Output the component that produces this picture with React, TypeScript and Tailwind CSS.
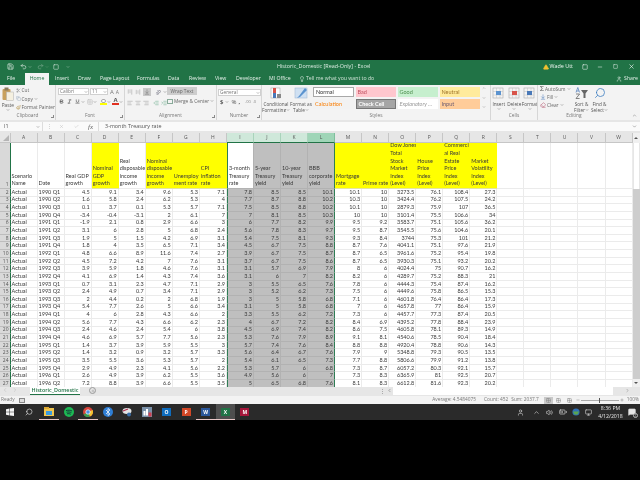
import React from "react";
import { ChevronDown, ChevronUp, Scissors, Copy, Paintbrush, Bold, Italic, Underline, Search, Lightbulb, X, Check, Minus, Plus, Square, Save, Undo2, Redo2, User, Eraser, Volume2, BatteryMedium, Monitor, MessageSquare, Grid2x2, AlignLeft, AlignCenter, AlignRight, Indent, Outdent, ArrowDownToLine, ChevronLeft, ChevronRight, AlertTriangle } from "lucide-react";

const columns = "ABCDEFGHIJKLMNOPQRSTUVW".split("");

const headers: { t: string; y?: boolean }[] = [
  { t: "Scenario\nName" },
  { t: "Date" },
  { t: "Real GDP\ngrowth" },
  { t: "Nominal\nGDP\ngrowth", y: true },
  { t: "Real\ndisposable\nincome\ngrowth" },
  { t: "Nominal\ndisposable\nincome\ngrowth", y: true },
  { t: "Unemploy\nment rate", y: true },
  { t: "CPI\ninflation\nrate", y: true },
  { t: "3-month\nTreasury\nrate" },
  { t: "5-year\nTreasury\nyield" },
  { t: "10-year\nTreasury\nyield" },
  { t: "BBB\ncorporate\nyield" },
  { t: "Mortgage\nrate", y: true },
  { t: "Prime rate", y: true },
  { t: "Dow Jones\nTotal\nStock\nMarket\nIndex\n(Level)", y: true },
  { t: "House\nPrice\nIndex\n(Level)", y: true },
  { t: "Commerci\nal Real\nEstate\nPrice\nIndex\n(Level)", y: true },
  { t: "Market\nVolatility\nIndex\n(Level)", y: true },
];

const rows = [
  "1990_Q1 4.5 9.1 3.4 9.6 5.3 7.1 7.8 8.5 8.5 10.1 10.1 10 3273.5 76.1 108.4 27.3",
  "1990_Q2 1.6 5.8 2.4 6.2 5.3 4 7.7 8.7 8.8 10.2 10.3 10 3424.4 76.2 107.5 24.2",
  "1990_Q3 0.1 3.7 0.1 5.3 5.7 7.1 7.5 8.5 8.8 10.2 10.1 10 2879.3 75.9 107 36.5",
  "1990_Q4 -3.4 -0.4 -3.1 2 6.1 7 7 8.1 8.5 10.3 10 10 3101.4 75.5 106.6 34",
  "1991_Q1 -1.9 2.1 0.8 2.9 6.6 3 6 7.7 8.2 9.9 9.5 9.2 3583.7 75.1 105.6 36.2",
  "1991_Q2 3.1 6 2.8 5 6.8 2.4 5.6 7.8 8.3 9.7 9.5 8.7 3545.5 75.6 104.6 20.1",
  "1991_Q3 1.9 5 1.5 4.2 6.9 3.1 5.4 7.5 8.1 9.3 9.3 8.4 3744 75.3 101 21.2",
  "1991_Q4 1.8 4 3.5 6.5 7.1 3.4 4.5 6.7 7.5 8.8 8.7 7.6 4041.1 75.1 97.6 21.9",
  "1992_Q1 4.8 6.6 8.9 11.6 7.4 2.7 3.9 6.7 7.5 8.7 8.7 6.5 3961.6 75.2 95.4 19.8",
  "1992_Q2 4.5 7.2 4.2 7 7.6 3.1 3.7 6.7 7.5 8.6 8.7 6.5 3930.3 75.1 93.2 20.2",
  "1992_Q3 3.9 5.9 1.8 4.6 7.6 3.1 3.1 5.7 6.9 7.9 8 6 4024.4 75 90.7 16.2",
  "1992_Q4 4.1 6.9 1.4 4.3 7.4 3.6 3.1 6 7 8.2 8.2 6 4289.7 75.2 88.3 21",
  "1993_Q1 0.7 3.1 2.3 4.7 7.1 2.9 3 5.5 6.5 7.6 7.8 6 4444.3 75.4 87.4 16.2",
  "1993_Q2 2.4 4.9 0.7 3.4 7.1 2.9 3 5.2 6.2 7.3 7.5 6 4449.6 75.8 86.5 15.3",
  "1993_Q3 2 4.4 0.2 2 6.8 1.9 3 5 5.8 6.8 7.1 6 4601.8 76.4 86.4 17.3",
  "1993_Q4 5.4 7.7 2.6 5 6.6 3.4 3.1 5 5.8 6.8 7 6 4657.8 77 86.4 15.9",
  "1994_Q1 4 6 2.8 4.3 6.6 2 3.3 5.5 6.2 7.2 7.3 6 4457.7 77.3 87.4 20.5",
  "1994_Q2 5.6 7.7 4.3 6.6 6.2 2.3 4 6.7 7.2 8.2 8.4 6.9 4395.2 77.8 88.4 23.9",
  "1994_Q3 2.4 4.6 2.4 5.4 6 3.8 4.5 6.9 7.4 8.2 8.6 7.5 4605.8 78.1 89.3 14.9",
  "1994_Q4 4.6 6.9 5.7 7.7 5.6 2.3 5.3 7.6 7.9 8.9 9.1 8.1 4540.6 78.5 90.4 18.4",
  "1995_Q1 1.4 3.7 3.9 5.9 5.5 3 5.7 7.4 7.6 8.4 8.8 8.8 4920.4 78.8 90.6 14.3",
  "1995_Q2 1.4 3.2 0.9 3.2 5.7 3.3 5.6 6.4 6.7 7.6 7.9 9 5348.8 79.3 90.5 13.5",
  "1995_Q3 3.5 5.5 3.6 5.3 5.7 2 5.4 6.1 6.5 7.3 7.7 8.8 5806.6 79.9 91.2 13.8",
  "1995_Q4 2.9 4.9 2.3 4.1 5.6 2.2 5.3 5.7 6 6.8 7.3 8.7 6057.2 80.3 92.1 15.7",
  "1996_Q1 2.6 4.9 3.9 6.2 5.5 3.6 4.9 5.6 6 7 7.3 8.3 6365.9 81 92.5 20.7",
  "1996_Q2 7.2 8.8 3.9 6.6 5.5 3.5 5 6.5 6.8 7.6 8.1 8.3 6612.8 81.6 92.3 20.2",
];

function cellTone(i: number) {
  if (i === 8) return "bg-[#bfbfbf] border-b-[#b2b2b2] border-r-[#b2b2b2] border-l border-l-[#2f7d55]";
  if (i === 9 || i === 10) return "bg-[#bfbfbf] border-b-[#b2b2b2] border-r-[#b2b2b2]";
  if (i === 11) return "bg-[#bfbfbf] border-b-[#b2b2b2] border-r-[#2f7d55]";
  return "bg-white border-b-[#ebebeb] border-r-[#ebebeb]";
}

function Sheet() {
  return (
    <div className="flex h-[254px] overflow-hidden bg-[#e6e6e6]">
      <div className="grid h-[255px] w-[632.6px] shrink-0 grid-cols-[10.5px_repeat(23,27.05px)] grid-rows-[10px_46px_repeat(26,7.65px)] font-['Lato'] text-[5.5px] leading-[7px] text-[#3a3a3a]">
        <div className="flex items-end justify-end border-r border-b border-[#c6c6c6] bg-[#e6e6e6] p-[1px]">
          <div className="h-0 w-0 border-b-[6px] border-l-[6px] border-b-[#b5b5b5] border-l-transparent" />
        </div>
        {columns.map((c, i) => (
          <div
            key={c}
            className={
              "flex items-center justify-center border-r border-b font-['Open_Sans'] text-[5px] text-[#555] " +
              (i === 11
                ? "border-[#7fbf9d] border-b-[#217346] bg-[#9fd5b7]"
                : i >= 8 && i <= 10
                ? "border-[#a9d3bb] border-b-[#217346] bg-[#cfe8da]"
                : "border-[#c6c6c6] bg-[#e6e6e6]")
            }
          >
            {c}
          </div>
        ))}
        <div className="flex items-end justify-end border-r border-b border-r-[#217346] border-b-[#bdbdbd] bg-[#d9d9d9] pr-[1px] font-['Open_Sans'] text-[5px] text-[#555]">1</div>
        {columns.map((c, i) => {
          const h = headers[i];
          const yellow = h && h.y;
          let tone = "border-r border-b border-b-[#ebebeb] border-r-[#ebebeb] bg-white";
          if (yellow) tone = "bg-[#ffff00] border-b border-b-[#e4e4a0]";
          if (i === 8) tone = "bg-white border-l border-l-[#2f7d55] border-r border-r-[#b2b2b2] border-b border-b-[#b2b2b2]";
          if (i === 9 || i === 10) tone = "bg-[#bfbfbf] border-r border-r-[#b2b2b2] border-b border-b-[#b2b2b2]";
          if (i === 11) tone = "bg-[#bfbfbf] border-r border-r-[#2f7d55] border-b border-b-[#b2b2b2]";
          return (
            <div key={c} className={"flex items-end overflow-hidden pl-[1px] whitespace-pre leading-[7.6px] " + tone}>
              {h ? h.t : ""}
            </div>
          );
        })}
        {rows.map((r, ri) => {
          const vals = r.split(" ");
          return (
            <React.Fragment key={ri}>
              <div className="flex items-center justify-end border-r border-b border-r-[#217346] border-b-[#bdbdbd] bg-[#d9d9d9] pr-[1px] font-['Open_Sans'] text-[5px] text-[#555]">
                {ri + 2}
              </div>
              {columns.map((c, i) => {
                let text = "";
                if (i === 0) text = "Actual";
                else if (i === 1) text = vals[0].replace("_", " ");
                else if (i - 1 < vals.length) text = vals[i - 1];
                return (
                  <div
                    key={c}
                    className={
                      "flex items-center overflow-hidden border-r border-b pr-[1px] pl-[1px] " +
                      (i < 2 ? "justify-start " : "justify-end ") +
                      cellTone(i)
                    }
                  >
                    {text}
                  </div>
                );
              })}
            </React.Fragment>
          );
        })}
      </div>
      <div className="flex flex-1 flex-col bg-[#cdcdcd]">
        <div className="flex h-[10px] items-center justify-center bg-[#f0f0f0]">
          <div className="h-0 w-0 border-r-[2px] border-b-[2px] border-l-[2px] border-r-transparent border-b-[#555] border-l-transparent" />
        </div>
        <div className="h-[46px] border-x border-[#e6e6e6] bg-white" />
        <div className="flex-1" />
        <div className="flex h-[8px] items-center justify-center bg-[#f0f0f0]">
          <div className="h-0 w-0 border-t-[2px] border-r-[2px] border-l-[2px] border-t-[#555] border-r-transparent border-l-transparent" />
        </div>
      </div>
    </div>
  );
}

function Group({ w, label, launcher, children }: { w: string; label: string; launcher?: boolean; children: React.ReactNode }) {
  return (
    <div className={"relative flex h-[35px] shrink-0 flex-col border-r border-[#d6d6d6] " + w}>
      <div className="flex flex-1 overflow-hidden">{children}</div>
      <div className="h-[8px] pb-[1px] text-center text-[4.8px] leading-[6px] text-[#777]">{label}</div>
      {launcher && (
        <div className="absolute right-[1px] bottom-[2px] h-[3px] w-[3px] border-r border-b border-[#888]" />
      )}
    </div>
  );
}

const Chev = () => <ChevronDown size={4} strokeWidth={2.5} className="shrink-0 text-[#666]" />;

function LargeBtn({ w, icon, a, b }: { w: string; icon: React.ReactNode; a: string; b?: string }) {
  return (
    <div className={"flex shrink-0 flex-col items-center pt-[2px] text-[4.7px] leading-[6px] text-[#555] " + w}>
      <div className="flex h-[12px] items-center justify-center">{icon}</div>
      <div className="mt-[2px] whitespace-nowrap">{a}</div>
      <div className="flex items-center whitespace-nowrap">
        {b}
        <Chev />
      </div>
    </div>
  );
}

function StyleCell({ cls, children }: { cls: string; children: string }) {
  return (
    <div className={"flex h-[10px] w-[40.5px] items-center overflow-hidden whitespace-nowrap pl-[2px] font-['Lato'] text-[5.5px] " + cls}>
      {children}
    </div>
  );
}

function Ribbon() {
  return (
    <div className="flex h-[35px] bg-[#f3f3f3] font-['Open_Sans']">
      <Group w="w-[56px]" label="Clipboard" launcher>
        <div className="flex w-[16px] flex-col items-center pt-[2px] text-[4.8px] leading-[6px] text-[#555]">
          <svg width="12" height="14" viewBox="0 0 12 14">
            <rect x="0.5" y="2" width="8" height="11" rx="1" fill="#c9a15c" />
            <rect x="2.5" y="0.5" width="4" height="3" fill="#8a7a5c" />
            <rect x="4.5" y="5" width="7" height="8.5" fill="#f5f0e0" stroke="#b0b0b0" strokeWidth="0.5" />
          </svg>
          <div className="mt-[1px]">Paste</div>
          <Chev />
        </div>
        <div className="flex flex-col gap-[2.5px] pt-[2px] text-[4.8px] leading-[6px] text-[#666]">
          <div className="flex items-center gap-[1px]"><Scissors size={5} className="text-[#888]" />Cut</div>
          <div className="flex items-center gap-[1px]"><Copy size={5} className="text-[#9ab]" />Copy<Chev /></div>
          <div className="flex items-center gap-[1px] whitespace-nowrap"><Paintbrush size={5} className="text-[#b08a3c]" />Format Painter</div>
        </div>
      </Group>
      <Group w="w-[69px]" label="Font" launcher>
        <div className="flex flex-col gap-[3px] pt-[3px] pl-[2px] text-[4.8px] text-[#777]">
          <div className="flex items-center gap-[1px]">
            <div className="flex h-[7px] w-[31px] items-center justify-between border border-[#d0d0d0] bg-white pl-[1px] leading-[5px]">Calibri<Chev /></div>
            <div className="flex h-[7px] w-[18px] items-center justify-between border border-[#d0d0d0] bg-white pl-[1px] leading-[5px]">11<Chev /></div>
            <span className="ml-[1px] text-[6px] leading-[6px]">A</span>
            <span className="ml-[1px] text-[5px] leading-[6px]">A</span>
          </div>
          <div className="flex items-center text-[#555]">
            <Bold size={5} strokeWidth={3.5} className="ml-[1px]" />
            <Italic size={5} strokeWidth={3} className="ml-[3px]" />
            <Underline size={5} strokeWidth={3} className="ml-[3px]" />
            <div className="ml-[1px]"><Chev /></div>
            <Grid2x2 size={6} className="ml-[2px] text-[#aaa]" strokeWidth={1.5} />
            <Chev />
            <div className="ml-[3px] flex flex-col items-center">
              <div className="h-[4px] w-[5px] rounded-sm border border-[#aaa] bg-white" />
              <div className="h-[2px] w-[7px] bg-[#ffff00]" />
            </div>
            <Chev />
            <div className="ml-[1px] flex flex-col items-center">
              <span className="text-[6px] leading-[4px] font-bold text-[#555]">A</span>
              <div className="mt-[1px] h-[2px] w-[7px] bg-[#e03020]" />
            </div>
            <Chev />
          </div>
        </div>
      </Group>
      <Group w="w-[92px]" label="Alignment" launcher>
        <div className="flex w-[42px] flex-col gap-[4px] pt-[3px] pl-[2px] text-[#999]">
          <div className="flex items-center gap-[2px]">
            <AlignLeft size={6} className="rotate-90" />
            <AlignCenter size={6} className="rotate-90" />
            <div className="flex h-[8px] w-[8px] items-center justify-center bg-[#c8c8c8]"><ArrowDownToLine size={6} className="text-[#777]" /></div>
            <span className="ml-[2px] -rotate-45 text-[5px] leading-[6px] text-[#667]">ab</span>
            <Chev />
          </div>
          <div className="flex items-center gap-[2px]">
            <AlignLeft size={6} />
            <AlignCenter size={6} />
            <AlignRight size={6} />
            <Outdent size={6} className="ml-[2px] text-[#6a8]" />
            <Indent size={6} className="text-[#6a8]" />
          </div>
        </div>
        <div className="flex flex-col gap-[3px] pt-[2px] text-[4.8px] leading-[6px] text-[#666]">
          <div className="flex h-[8px] w-[30px] items-center justify-center whitespace-nowrap bg-[#cdcdcd]">Wrap Text</div>
          <div className="flex items-center gap-[1px] whitespace-nowrap">
            <div className="h-[5px] w-[6px] border border-[#8a9]" />Merge &amp; Center<Chev />
          </div>
        </div>
      </Group>
      <Group w="w-[45px]" label="Number" launcher>
        <div className="flex flex-col gap-[3px] pt-[4px] pl-[1px] text-[4.8px] text-[#777]">
          <div className="flex h-[7px] w-[43px] items-center justify-between border border-[#d0d0d0] bg-white pl-[1px] leading-[5px]">General<Chev /></div>
          <div className="flex items-center gap-[2px] pl-[2px] text-[6px] leading-[6px] text-[#555]">
            <span className="font-bold">$</span><Chev /><span>%</span><span className="font-bold">,</span>
            <span className="ml-[3px] text-[4px] text-[#888]">.00</span><span className="text-[4px] text-[#888]">.0</span>
          </div>
        </div>
      </Group>
      <Group w="w-[229px]" label="Styles">
        <LargeBtn
          w="w-[28px]"
          a="Conditional"
          b="Formatting"
          icon={
            <svg width="12" height="12" viewBox="0 0 12 12">
              <rect x="1" y="1" width="9" height="10" fill="#fff" stroke="#aaa" strokeWidth="0.6" />
              <rect x="3" y="1" width="3" height="5" fill="#d8544a" />
              <rect x="3" y="6" width="3" height="5" fill="#4a79b8" />
              <rect x="7" y="7" width="4" height="4" fill="#888" />
            </svg>
          }
        />
        <LargeBtn
          w="w-[22px]"
          a="Format as"
          b="Table"
          icon={
            <svg width="14" height="12" viewBox="0 0 14 12">
              <rect x="1" y="1" width="12" height="10" fill="#cfe0f2" stroke="#a5bcd6" strokeWidth="0.6" />
              <path d="M11 1 L5 9 L3 11 L6 10 L13 3Z" fill="#5b93cf" />
            </svg>
          }
        />
        <div className="ml-[1px] flex flex-col gap-[2px] pt-[2px]">
          <div className="flex gap-[1.5px]">
            <StyleCell cls="w-[41px] border border-[#a8a8a8] bg-white text-[#333]">Normal</StyleCell>
            <StyleCell cls="bg-[#ffc7ce] text-[#c05060]">Bad</StyleCell>
            <StyleCell cls="bg-[#c6efce] text-[#4f8f50]">Good</StyleCell>
            <StyleCell cls="bg-[#ffeb9c] text-[#a0762c]">Neutral</StyleCell>
          </div>
          <div className="flex gap-[1.5px]">
            <StyleCell cls="w-[41px] bg-[#f2f2f2] text-[#fa7d00]">Calculation</StyleCell>
            <StyleCell cls="border border-[#777] bg-[#a5a5a5] font-bold text-white">Check Cell</StyleCell>
            <StyleCell cls="bg-white text-[#999] italic">Explanatory ...</StyleCell>
            <StyleCell cls="bg-[#ffcc99] text-[#6a5a70]">Input</StyleCell>
          </div>
        </div>
        <div className="ml-[1px] flex h-[24px] w-[6px] flex-col items-center justify-between pt-[1px] text-[#777]">
          <ChevronUp size={4} />
          <ChevronDown size={4} />
          <ChevronDown size={4} />
        </div>
      </Group>
      <Group w="w-[47px]" label="Cells">
        {[
          ["Insert", "#5b93cf"],
          ["Delete", "#d8544a"],
          ["Format", "#4a79b8"],
        ].map(([t, c]) => (
          <LargeBtn
            key={t}
            w="w-[15.5px]"
            a={t}
            icon={
              <svg width="13" height="12" viewBox="0 0 13 12">
                <rect x="1" y="1" width="10" height="10" fill="#f4f4f4" stroke="#aaa" strokeWidth="0.6" />
                <path d="M1 4.5H11M1 8H11M4.5 1V11M8 1V11" stroke="#c0c0c0" strokeWidth="0.5" />
                <rect x="4" y="4" width="5" height="4" fill={c} />
              </svg>
            }
          />
        ))}
      </Group>
      <div className="relative flex h-[35px] w-[72px] shrink-0 flex-col">
        <div className="flex flex-1 overflow-hidden">
          <div className="flex w-[34px] shrink-0 flex-col gap-[2px] pt-[1px] pl-[2px] text-[4.8px] leading-[6px] text-[#666]">
            <div className="flex items-center gap-[1px] whitespace-nowrap"><span className="text-[7px] leading-[6px] text-[#555]">Σ</span>AutoSum<Chev /></div>
            <div className="flex items-center gap-[1px]"><ArrowDownToLine size={6} className="text-[#4a79b8]" />Fill<Chev /></div>
            <div className="flex items-center gap-[1px]"><Eraser size={6} className="text-[#b0506a]" />Clear<Chev /></div>
          </div>
          <LargeBtn
            w="w-[19px]"
            a="Sort &"
            b="Filter"
            icon={
              <svg width="14" height="12" viewBox="0 0 14 12">
                <path d="M1 5.5 2.8.5 4.6 5.5M1.6 4H4" stroke="#4a79b8" strokeWidth="0.7" fill="none" />
                <path d="M1 7H4.6L1 11.5H4.6" stroke="#555" strokeWidth="0.7" fill="none" />
                <path d="M6 3H13L10.5 6.5V11H8.5V6.5Z" fill="#666" />
              </svg>
            }
          />
          <LargeBtn w="w-[17px]" a="Find &" b="Select" icon={<Search size={12} strokeWidth={1.6} className="-scale-x-100 text-[#3f7fc2]" />} />
        </div>
        <div className="h-[8px] pb-[1px] text-center text-[4.8px] leading-[6px] text-[#777]">Editing</div>
      </div>
      <div className="flex flex-1 items-end justify-end pr-[3px] pb-[2px]">
        <ChevronUp size={5} className="text-[#666]" />
      </div>
    </div>
  );
}

function TaskIcon({ w = "w-[19.6px]", line, active, children }: { w?: string; line?: boolean; active?: boolean; children?: React.ReactNode }) {
  return (
    <div className={"flex h-[16px] shrink-0 items-center justify-center border-b " + w + " " + (active ? "bg-[#4e4e4e] " : "") + (line ? "border-[#e8c6c6]" : "border-transparent")}>
      {children}
    </div>
  );
}

function LetterTile({ bg, children }: { bg: string; children: string }) {
  return (
    <div className={"flex h-[8px] w-[9px] items-center justify-center text-[5px] leading-[6px] font-bold text-white " + bg}>{children}</div>
  );
}

function Taskbar() {
  return (
    <div className="flex h-[16px] shrink-0 items-center bg-[#2a2a2a] font-['Open_Sans'] text-white">
      <TaskIcon>
        <svg width="8" height="8" viewBox="0 0 8 8" fill="#f4f4f4">
          <path d="M0 1.2 3.5.6V3.8H0ZM4 .5 8 0V3.8H4ZM0 4.2H3.5V7.4L0 6.8ZM4 4.2H8V8L4 7.5Z" />
        </svg>
      </TaskIcon>
      <TaskIcon><Search size={8} className="-scale-x-100 text-[#ddd]" /></TaskIcon>
      <TaskIcon line>
        <svg width="10" height="9" viewBox="0 0 10 9">
          <rect y="1" width="10" height="8" fill="#f0c550" />
          <rect x="2" y="4" width="6" height="4" fill="#3a9be0" />
          <rect width="5" height="2" fill="#dca830" />
        </svg>
      </TaskIcon>
      <TaskIcon>
        <svg width="10" height="10" viewBox="0 0 10 10">
          <circle cx="5" cy="5" r="5" fill="#1db954" />
          <path d="M2 3.6C4 3 6.5 3.1 8 4M2.5 5.2C4 4.8 6 4.9 7.4 5.6M3 6.8C4.3 6.5 5.7 6.6 6.8 7.2" stroke="#123" strokeWidth="0.8" fill="none" />
        </svg>
      </TaskIcon>
      <TaskIcon line>
        <svg width="10" height="10" viewBox="0 0 10 10">
          <circle cx="5" cy="5" r="5" fill="#d8443a" />
          <path d="M5 5 L0.6 7.5 A5 5 0 0 0 7 9.6Z" fill="#3a9d50" />
          <path d="M5 5 L9.6 3 A5 5 0 0 1 7 9.6Z" fill="#f2c230" />
          <circle cx="5" cy="5" r="2.2" fill="#4a8fe0" stroke="#fff" strokeWidth="0.7" />
        </svg>
      </TaskIcon>
      <TaskIcon>
        <svg width="10" height="10" viewBox="0 0 10 10">
          <circle cx="5" cy="5" r="5" fill="#2f7fd6" />
          <path d="M3 3 7 7 5 8.5V1.5L7 3 3 7" stroke="#fff" strokeWidth="0.7" fill="none" />
        </svg>
      </TaskIcon>
      <TaskIcon>
        <svg width="10" height="10" viewBox="0 0 10 10">
          <ellipse cx="5" cy="4" rx="4.5" ry="3" fill="#e4e4e4" />
          <path d="M1 4 6 2" stroke="#b03050" strokeWidth="1.2" />
          <circle cx="7" cy="7.5" r="2" fill="#3a6ea8" />
        </svg>
      </TaskIcon>
      <TaskIcon>
        <svg width="10" height="10" viewBox="0 0 10 10">
          <rect width="10" height="10" fill="#7a90a8" />
          <rect x="1.5" y="4" width="2" height="4.5" fill="#fff" />
          <rect x="4" y="2" width="2" height="6.5" fill="#fff" />
          <rect x="6.5" y="5.5" width="3" height="4" fill="#d04050" />
        </svg>
      </TaskIcon>
      <TaskIcon><LetterTile bg="bg-[#0f6cbd]">O</LetterTile></TaskIcon>
      <TaskIcon><LetterTile bg="bg-[#d24726]">P</LetterTile></TaskIcon>
      <TaskIcon line><LetterTile bg="bg-[#2b579a]">W</LetterTile></TaskIcon>
      <TaskIcon line active><LetterTile bg="bg-[#217346]">X</LetterTile></TaskIcon>
      <TaskIcon><LetterTile bg="bg-[#a5163a]">M</LetterTile></TaskIcon>
      <div className="flex-1" />
      <div className="flex h-[16px] items-center text-[#ddd]">
        <User size={7} className="mr-[9px]" />
        <ChevronUp size={7} className="mr-[6px]" />
        <Volume2 size={7} className="mr-[6px]" />
        <BatteryMedium size={8} className="mr-[5px]" />
        <svg width="8" height="8" viewBox="0 0 8 8" className="mr-[5px]">
          <circle cx="4" cy="4" r="3.6" fill="#2f6fb5" />
          <path d="M1 3.4H7L5.6 6.4H2.4Z" fill="#5aa54f" />
        </svg>
        <Monitor size={7} className="mr-[5px]" />
        <div className="flex w-[27px] flex-col items-center text-[5.2px] leading-[8px] text-[#e6e6e6]">
          <div>8:36 PM</div>
          <div>4/12/2018</div>
        </div>
        <div className="relative mr-[4px] ml-[4px]">
          <MessageSquare size={8} fill="#e6e6e6" />
          <div className="absolute -right-[2px] -bottom-[2px] flex h-[5px] w-[5px] items-center justify-center rounded-full border border-[#bbb] bg-[#2a2a2a] text-[3.5px] leading-[4px]">1</div>
        </div>
      </div>
    </div>
  );
}

const tabs: [string, string][] = [
  ["File", "w-[25px] pl-[7px]"],
  ["Home", ""],
  ["Insert", "ml-[6px] w-[23px]"],
  ["Draw", "w-[22px]"],
  ["Page Layout", "w-[37px]"],
  ["Formulas", "w-[31px]"],
  ["Data", "w-[21px]"],
  ["Review", "w-[26px]"],
  ["View", "w-[21px]"],
  ["Developer", "w-[33px]"],
  ["MI Office", "w-[29px]"],
];

export default function App() {
  return (
    <div className="flex h-[480px] w-[640px] flex-col overflow-hidden bg-black font-['Open_Sans'] blur-[0.3px]">
      <div className="h-[60px] shrink-0" />
      <div className="relative flex h-[13px] shrink-0 items-center bg-[#217346] text-white">
        <div className="flex items-center pl-[7px] text-[#e8f0ea]">
          <Save size={7} />
          <Undo2 size={7} className="ml-[6px]" />
          <ChevronDown size={4} className="ml-[1px]" />
          <Redo2 size={7} className="ml-[5px] text-[#7aa98f]" />
          <ChevronDown size={4} className="ml-[1px] text-[#7aa98f]" />
          <Square size={6} className="ml-[4px]" />
          <ChevronDown size={4} className="ml-[7px]" />
        </div>
        <div className="ml-[207px] whitespace-nowrap text-[5.4px] text-[#dcebe2]">Historic_Domestic [Read-Only] - Excel</div>
        <div className="flex-1" />
        <AlertTriangle size={6} fill="#f2c230" className="text-[#f2c230]" />
        <span className="ml-[1px] text-[5.4px] text-[#eef5f0]">Wade Utt</span>
        <Square size={6} className="ml-[9px]" />
        <Minus size={6} className="ml-[9px]" />
        <Square size={5} className="ml-[10px]" />
        <X size={7} className="mr-[5px] ml-[10px]" />
      </div>
      <div className="flex h-[12px] shrink-0 items-end bg-[#217346] text-[5.2px] text-[#e6f0ea]">
        {tabs.map(([t, c]) =>
          t === "Home" ? (
            <div key={t} className="flex h-[12px] w-[24px] items-center justify-center bg-[#f3f3f3] text-[#217346]">Home</div>
          ) : (
            <div key={t} className={"flex h-[12px] items-center whitespace-nowrap " + c}>{t}</div>
          )
        )}
        <Lightbulb size={6} className="mb-[3px] ml-[1px]" />
        <div className="flex h-[12px] items-center pl-[1px] whitespace-nowrap text-[#cfe2d6]">Tell me what you want to do</div>
        <div className="flex-1" />
        <User size={6} className="mb-[3px]" />
        <div className="flex h-[12px] items-center pr-[2px] pl-[2px]">Share</div>
      </div>
      <Ribbon />
      <div className="h-[2px] shrink-0 bg-[#e6e6e6]" />
      <div className="flex h-[9px] shrink-0 items-center bg-[#fafafa] text-[5.4px] text-[#555]">
        <div className="flex h-[9px] w-[43px] items-center justify-between border-r border-[#ddd] pr-[2px] pl-[4px]">I1<Chev /></div>
        <div className="w-[13px] text-center text-[#bbb]">⋮</div>
        <X size={5} className="ml-[3px] text-[#bbb]" />
        <Check size={5} className="ml-[10px] text-[#bbb]" />
        <span className="ml-[9px] font-['Liberation_Serif'] text-[7px] leading-[8px] text-[#666] italic">fx</span>
        <div className="ml-[5px] h-[9px] border-l border-[#ddd] pl-[6px] leading-[9px]">3-month Treasury rate</div>
        <div className="flex-1" />
        <ChevronDown size={5} className="mr-[3px]" />
      </div>
      <div className="h-[2px] shrink-0 bg-[#e6e6e6]" />
      <Sheet />
      <div className="flex h-[9px] shrink-0 items-start bg-[#e6e6e6] text-[5.4px] text-[#bbb]">
        <ChevronLeft size={6} className="ml-[2px]" />
        <ChevronRight size={6} className="ml-[4px]" />
        <div className="ml-[12px] flex h-[8px] w-[50px] items-center justify-center border-b border-[#217346] bg-white font-semibold text-[#217346]">Historic_Domestic</div>
        <div className="ml-[9px] flex h-[7px] w-[7px] items-center justify-center rounded-full border border-[#999] text-[#777]">
          <Plus size={4} />
        </div>
        <div className="ml-[283px] w-[6px] text-center text-[#777]">⋮</div>
        <ChevronLeft size={5} className="mt-[1px] ml-[2px] text-[#555]" />
        <div className="ml-[1px] h-[8px] w-[220px] bg-white" />
        <ChevronRight size={5} className="mt-[1px] ml-[12px] text-[#777]" />
      </div>
      <div className="flex h-[8px] shrink-0 items-center bg-[#f3f3f3] text-[4.8px] text-[#777]">
        <span className="ml-[1px]">Ready</span>
        <div className="ml-[4px] h-[5px] w-[6px] border border-[#888] bg-[#ddd]" />
        <div className="flex-1" />
        <span>Average: 4.5484075</span>
        <span className="ml-[8px]">Count: 452</span>
        <span className="ml-[3px]">Sum: 2037.7</span>
        <div className="ml-[5px] flex h-[7px] w-[9px] items-center justify-center bg-[#c9c9c9]"><Grid2x2 size={5} /></div>
        <Grid2x2 size={5} className="ml-[3px]" />
        <Grid2x2 size={5} className="ml-[6px]" />
        <Minus size={4} className="ml-[4px] text-[#555]" />
        <div className="relative ml-[1px] h-[1px] w-[38px] bg-[#aaa]">
          <div className="absolute top-[-2px] left-[18px] h-[5px] w-[1px] bg-[#555]" />
        </div>
        <Plus size={4} className="ml-[1px] text-[#555]" />
        <span className="mr-[1px] ml-[3px]">100%</span>
      </div>
      <Taskbar />
    </div>
  );
}
